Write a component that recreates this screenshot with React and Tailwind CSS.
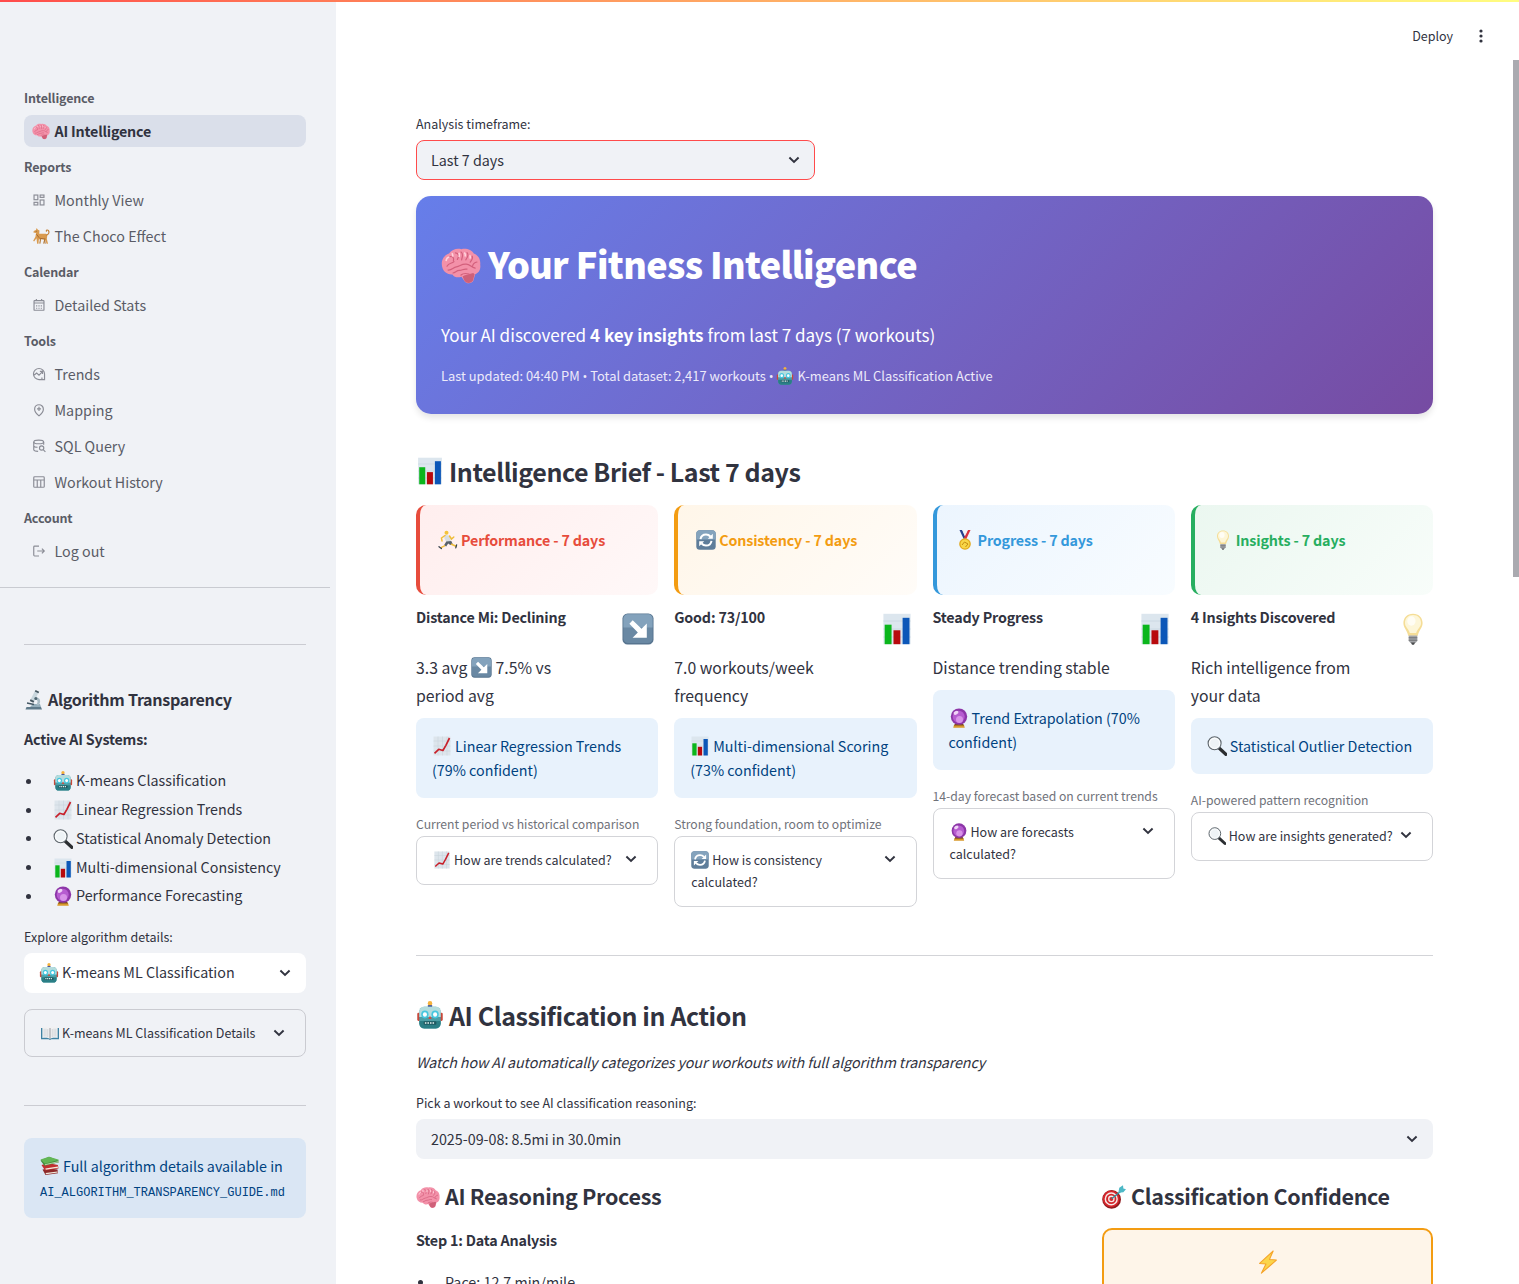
import React from "react";

/* ---------- pictographs ---------- */

const art = {
  brain: (
    <>
      <path d="M.6 11C-.2 8 1.400 5 4 4.300 5.400 2 8.300 1.500 10.200 2.100c2.600-.6 5.200.5 6.200 2.200 2.500.8 3.500 3.400 3.200 5.500.4 2.300-.7 4.200-2.500 4.800l-.9 3.200c-.8 1.700-3.300 1.800-4.300.5l-1.700-2.400c-1.600.6-3.800.2-4.500-1.200-2.200.2-4.500-1.100-5.100-3.700z" fill="#f391a9" />
      <path d="M11.600 15.200l4.500-1.200.7.600-.8 3.200c-.9 1.500-3.200 1.600-4.200.2l-1-2.200z" fill="#cf6079" />
      <path d="M3 10.600c1-2 2.300-1 3.500-2.300M4.500 5.800c1.500-.3 2 .8 1.700 2M7.200 3.900c1.800.2 1.800 1.800 1 3.300M10 3.500c1.500 1 .5 2.500.3 4M13 3.800c1 1.200.2 2.600-.6 3.600M15.600 5.600c.6 1.300-.4 2-1 3M18 8.500c-1 .2-2 1-2.200 2M3.500 12.500c1.800.3 2.500-1.300 4.200-1.600 1.800-.2 2.500-1.500 4.800-1.300 2-.1 2.500 1.600 4.600 2M6 14c1.300-.2 1.700-1.300 3.200-1.300 1.400.1 2-1 3.800-.6M10 15c1-.9 2.500-.9 4-.5" fill="none" stroke="#d3607c" strokeWidth=".6" strokeLinecap="round" />
      <path d="M2.500 8c.3-1.500 1-2 1.600-1.800M5.800 5.800c.2-1.200-.1-1.500-.5-1.600M9 6c.3-1 .2-1.700-.2-2M12 5.800c.3-1 0-1.700-.4-2M14.500 6.800c.2-.8.100-1.400-.2-1.700" stroke="#ffd3dc" strokeWidth=".8" fill="none" />
    </>
  ),
  dog: (
    <>
      <path d="M2 4.500l2.400-1.300L5.200 1l1.300 2 1.800 1-.3 3.500h7.500l1.500 1.800-.5 4 1.300 5.200h-1.500l-2-4.500-4.300-.5-2.400.3-.4 4.700H5.700L5 12.500l-2.700 3.500-1-.8 2.500-4.400.7-4L1.500 6z" fill="#d99a4e" />
      <path d="M16 9c2.800-.8 3.500-3.300 2.300-5-1-1.200-2.800-.5-2.300.6" stroke="#c28038" strokeWidth="1.300" fill="none" strokeLinecap="round" />
      <path d="M5 8l3 4M8.500 12.500l5.500.8M13.800 14l1 4.500" stroke="#9c602a" strokeWidth=".9" fill="none" />
      <path d="M9.500 13.500l-.8 5M14.500 12.500l-1.500 6" stroke="#b3762f" strokeWidth="1.200" />
      <circle cx="4.600" cy="4.600" r=".5" fill="#3b2613" />
    </>
  ),
  microscope: (
    <>
      <path d="M2.500 17h14.500l1 2.500H1.500z" fill="#5f7a8a" />
      <path d="M9 14h7l1 3H6z" fill="#93adba" />
      <path d="M12 7c4.500.8 5.500 5 2.300 8.500l-2-.8c2-2.500 1.700-4.700-1.300-5.400z" fill="#a9bcc6" />
      <path d="M11 .8l3.600 1.700-4.300 9L6.500 9.700z" fill="#c9d7de" />
      <path d="M11.600 0l3.600 1.700-.8 1.600-3.600-1.700zM6.600 9.300l3.700 1.800-.9 1.700-3.600-1.700z" fill="#44555f" />
      <path d="M3 13l7 1.500" stroke="#435764" strokeWidth="1.400" />
      <circle cx="11.800" cy="8.500" r="1.500" fill="#4f6672" />
    </>
  ),
  robot: (
    <g transform="translate(.9 0) scale(.91 .98)">
      <circle cx="10" cy="1.800" r="1.800" fill="#f6b23c" />
      <rect x="8.300" y="3" width="3.400" height="2" fill="#47569a" />
      <rect x="0" y="8.500" width="2.600" height="6" rx="1" fill="#c8483a" />
      <rect x="17.400" y="8.500" width="2.600" height="6" rx="1" fill="#c8483a" />
      <rect x="1.600" y="4.200" width="16.800" height="15.800" rx="3.800" fill="#4d9fa6" />
      <path d="M5.100 4.200h9.800c2 0 3.500 1.500 3.500 3.500v4H1.600v-4c0-2 1.500-3.500 3.500-3.500z" fill="#b4dcdd" />
      <path d="M1.600 14.500h16.800v1.700c0 2.400-1.500 3.800-4 3.800H5.600c-2.500 0-4-1.400-4-3.800z" fill="#2a7e85" />
      <circle cx="6" cy="9.800" r="2.900" fill="#45c6de" />
      <circle cx="14" cy="9.800" r="2.900" fill="#45c6de" />
      <circle cx="6" cy="9.800" r="1.600" fill="#fff" />
      <circle cx="14" cy="9.800" r="1.600" fill="#fff" />
      <path d="M10 10.800l1.300 2.400H8.700z" fill="#d5483a" />
      <rect x="5" y="14.800" width="10" height="2.500" rx=".8" fill="#1f5a61" />
      <path d="M6 16h8" stroke="#e8f4f2" strokeWidth="1.200" strokeDasharray="1.200 .8" />
    </g>
  ),
  trend: (
    <>
      <rect x="1.500" y=".5" width="17" height="19" fill="#dde5ec" />
      <path d="M1.500 5h17M1.500 10h17M1.500 15h17M6 .5v19M10.500 .5v19M15 .5v19" stroke="#c5d0da" strokeWidth=".5" />
      <path d="M2.500 17.300l4.200-4 4.200 1.200 3-5.200L17.500 2" stroke="#c8202a" strokeWidth="1.700" fill="none" strokeLinejoin="round" />
    </>
  ),
  lens: (
    <>
      <path d="M12.300 12.300l6.500 6" stroke="#2b2e31" strokeWidth="3.200" strokeLinecap="round" />
      <circle cx="7.600" cy="7.300" r="6.500" fill="#eef3f6" stroke="#5d656b" strokeWidth="1.100" />
      <circle cx="7.600" cy="7.300" r="5" fill="none" stroke="#fff" strokeWidth=".8" />
    </>
  ),
  bars: (
    <>
      <rect x="1.500" y=".5" width="17" height="19" fill="#dce6ee" />
      <path d="M1.500 5h17M1.500 10h17M1.500 15h17" stroke="#c8d5df" strokeWidth=".5" />
      <rect x="2.300" y="7.300" width="4.300" height="12.200" fill="#0bb61c" />
      <rect x="7.800" y="10.800" width="4.300" height="8.700" fill="#b80a0e" />
      <rect x="13.500" y="3" width="4.300" height="16.500" fill="#0c57b8" />
    </>
  ),
  crystal: (
    <>
      <path d="M5 17l-.8 2.700h11.600L15 17z" fill="#d89a2b" />
      <path d="M6 15.500h8l1 2H5z" fill="#7c4a1b" />
      <circle cx="10" cy="8.600" r="8.200" fill="#8d36a8" />
      <circle cx="9.700" cy="8.800" r="6" fill="#b65cd0" />
      <circle cx="10.500" cy="11.500" r="3.500" fill="#d893e8" />
      <ellipse cx="7" cy="4.800" rx="2.600" ry="1.800" fill="#f1d4f7" transform="rotate(-30 7 4.800)" />
    </>
  ),
  book: (
    <>
      <path d="M0 4.500h20v12.500l-8.500 0-1.500.8-1.500-.8H0z" fill="#3f82a3" />
      <path d="M1.500 3.200C5 2.500 8.500 3 10 4.500c1.500-1.500 5-2 8.500-1.300v12.300c-3.500-.6-7-.2-8.500 1-1.500-1.200-5-1.600-8.500-1z" fill="#f1f1f2" />
      <path d="M10 4.500v12" stroke="#8e9094" strokeWidth="1" />
      <path d="M3.500 5.200v8.800M5.500 5.200v8.800M7.500 5.600v8.800M12.500 5.600v8.800M14.500 5.200v8.800M16.500 5.200v8.800" stroke="#c9cbd0" strokeWidth=".8" />
    </>
  ),
  books: (
    <>
      <path d="M2.500 13.500l3 5.500 12.500-1.700-.5-3.800-8-1z" fill="#8d2a2a" />
      <path d="M5.500 17l12-1.600.3 1.200-11.600 1.700z" fill="#f0e9dc" />
      <path d="M1.500 9l3.500 5.500 13.500-2-.6-3.500L8 7z" fill="#c03030" />
      <path d="M5.300 12.500l12.600-2 .3 1.300L5.800 13.700z" fill="#f4ecdf" />
      <path d="M.5 4.500L4.500 9.800l14.500-3.500v-1.600L9 .8z" fill="#3e8e3d" />
      <path d="M.5 3.500L9 .8l10 3-14 4z" fill="#62b655" />
      <path d="M4.800 8.300L19 4.900v1L5 9.300z" fill="#b9d3a4" />
    </>
  ),
  runner: (
    <>
      <circle cx="8.500" cy="2.800" r="2" fill="#f3c33a" />
      <path d="M7 4.800l4.500 1 1.500 5.500-4.500 1.200L6.200 8z" fill="#d8dde2" />
      <path d="M7 5.500L3.500 8l.5 3M11.500 6l2 3 2.300-2" stroke="#efbd38" strokeWidth="1.500" fill="none" strokeLinecap="round" />
      <path d="M8.300 11.500l5-.5 1.500 3.300-2.600.8-2-1.700-2 3.200-2.200-1.400z" fill="#59616b" />
      <path d="M13.500 14.300l4.500 2M6.500 15.800l-3 1.500" stroke="#efbd38" strokeWidth="1.500" strokeLinecap="round" />
      <path d="M18.600 14.800l-.8 3M1 16.700l2.400 1.800" stroke="#36404c" strokeWidth="1.300" strokeLinecap="round" />
    </>
  ),
  cycle: (
    <>
      <rect x=".3" y=".3" width="19.400" height="19.400" rx="3.500" fill="#5e7d9a" />
      <path d="M3.800.3h12.400c2 0 3.500 1.500 3.500 3.500v5.700H.3V3.800c0-2 1.500-3.500 3.500-3.500z" fill="#84a3bd" />
      <path d="M4.500 9.200c.5-3 2.800-4.700 5.500-4.700 1.800 0 3.300.7 4.400 2M15.500 10.800c-.5 3-2.800 4.700-5.500 4.700-1.800 0-3.300-.7-4.400-2" stroke="#fff" strokeWidth="2" fill="none" />
      <path d="M16.800 3.800v5h-5zM3.200 16.200v-5h5z" fill="#fff" />
    </>
  ),
  medal: (
    <>
      <path d="M4.500 0h2.700l4 8-2.500 1z" fill="#27408f" />
      <path d="M15.500 0h-2.700l-4 8 2.500 1z" fill="#d9323f" />
      <path d="M7.200 0h1.500l2 4.500-.9 1.700zM12.800 0h-1.500l-1 2.300.7 1.700z" fill="#f2f2f4" />
      <circle cx="10" cy="14" r="5.800" fill="#e2a81c" />
      <circle cx="10" cy="14" r="4.500" fill="#f8d648" />
      <path d="M7 15l2.500-3 3.500 2-2.500 3" stroke="#c58d12" strokeWidth="1" fill="none" />
    </>
  ),
  bulb: (
    <>
      <path d="M10 .4c3.700 0 6 2.600 6 5.800 0 3-2.300 4.500-3 8H7c-.7-3.500-3-5-3-8C4 3 6.300.4 10 .4z" fill="#f5dd96" />
      <path d="M10 1.300c3 0 5 2 5 4.900 0 2.500-2.300 3.700-3 6.300H8c-.7-2.600-3-3.800-3-6.300 0-2.900 2-4.900 5-4.900z" fill="#fdf6d8" />
      <ellipse cx="9" cy="5" rx="2.600" ry="2.900" fill="#fffdf4" />
      <path d="M7.300 14h5.400v3.500l-1.200 1.300h-3l-1.200-1.300z" fill="#a3a5a8" />
      <path d="M7.300 15.500h5.400M7.300 17h5.400" stroke="#6b6d70" strokeWidth=".6" />
      <path d="M8.600 18.500h2.800l-.8 1.300H9.400z" fill="#4a4b4d" />
    </>
  ),
  arrow: (
    <>
      <rect x=".3" y=".3" width="19.400" height="19.400" rx="3.200" fill="#57748f" />
      <rect x=".9" y=".8" width="18.200" height="18" rx="2.800" fill="#6988a3" />
      <path d="M3.700.8h12.600c1.500 0 2.800 1.300 2.800 2.800v5.400H.9V3.600C.9 2.100 2.200.8 3.700.8z" fill="#83a2bc" />
      <path d="M6.700 4.500l5.500 5.300 3.300-3.200v8.900H6.600l3.300-3.300-5.300-5.500z" fill="#fff" />
    </>
  ),
  target: (
    <>
      <circle cx="8" cy="12" r="7.800" fill="#8f1a1e" />
      <circle cx="7.600" cy="11.600" r="7" fill="#d4262b" />
      <circle cx="7.700" cy="11.600" r="4.900" fill="none" stroke="#f6e9e8" strokeWidth="1.200" />
      <circle cx="7.800" cy="11.600" r="2.200" fill="none" stroke="#f6e9e8" strokeWidth="1.100" />
      <path d="M8 11.500l8.500-7" stroke="#2f8d9e" strokeWidth="1.100" />
      <path d="M13.600 6.500l.8-4.300L17.500.3l.3 2.600 2.200.6-2.200 2.500z" fill="#4db8c6" />
    </>
  ),
  bolt: (
    <path d="M14.300.8L3 11.200l5.300.4L4.500 19.300 17 8.400l-5.800-.5z" fill="#fbd54a" stroke="#f5a32a" strokeWidth=".9" strokeLinejoin="round" />
  ),
};

function Emoji({ name, className = "" }) {
  return (
    <svg viewBox="0 0 20 20" className={"inline-block shrink-0 " + className} aria-hidden="true">
      {art[name]}
    </svg>
  );
}

/* ---------- line icons ---------- */

const lineArt = {
  dashboard: (
    <>
      <rect x="3.500" y="3.500" width="6.500" height="8" />
      <rect x="14" y="3.500" width="6.500" height="4" />
      <rect x="14" y="12" width="6.500" height="8.500" />
      <rect x="3.500" y="16" width="6.500" height="4.500" />
    </>
  ),
  calendar: (
    <>
      <rect x="3.500" y="4.500" width="17" height="16.500" rx="1" />
      <path d="M3.500 8.500h17M7.500 1.500v3M16.500 1.500v3" />
      <path d="M7 13.500h2M11 13.500h2M15 13.500h2M7 17.500h2M11 17.500h2M15 17.500h2" />
    </>
  ),
  trends: (
    <path d="M21.500 12A9.500 9.500 0 1 0 12 21.500h9.500zM2.800 14.500L8 10.500l4 3.500 5.500-5.500M13.500 7.500H18v4.500M17 18v3" />
  ),
  pin: <path d="M12 22c-5-4.300-7.500-8-7.500-11.500a7.500 7.500 0 0 1 15 0C19.500 14 17 17.700 12 22zM12 6.500v7M8.500 10h7" />,
  database: (
    <>
      <ellipse cx="11.500" cy="5" rx="8.500" ry="3.200" />
      <path d="M3 5v13.500c0 1.300 3 2.500 7.500 2.700M20 5v5M3 11.500c0 1.300 2.500 2.500 6.500 2.700" />
      <circle cx="16.500" cy="15.500" r="3.700" />
      <path d="M19.500 18.500l3.500 3.500" />
    </>
  ),
  table: (
    <>
      <rect x="3" y="3" width="18" height="18" rx="1.500" />
      <path d="M3 8.500h18M9 8.500V21M15 8.500V21" />
    </>
  ),
  logout: <path d="M12 3.500H4.500A1.500 1.500 0 0 0 3 5v14a1.500 1.500 0 0 0 1.500 1.500H12M9 12h12M17 8l4 4-4 4" />,
};

function LineIcon({ name }) {
  return (
    <svg viewBox="0 0 24 24" className="mb-px h-3.5 w-3.5 shrink-0 text-[#8b8d96]" fill="none" stroke="currentColor" strokeWidth="2">
      {lineArt[name]}
    </svg>
  );
}

function Chevron({ className = "" }) {
  return (
    <svg viewBox="0 0 12 8" className={"h-2 w-3 shrink-0 text-[#31333f] " + className} fill="none" stroke="currentColor" strokeWidth="1.900">
      <path d="M1.400 1.500L6 6l4.600-4.500" />
    </svg>
  );
}

/* ---------- sidebar ---------- */

const nav = [
  { title: "Intelligence", items: [{ label: "AI Intelligence", emoji: "brain", active: true }] },
  {
    title: "Reports",
    items: [
      { label: "Monthly View", icon: "dashboard" },
      { label: "The Choco Effect", emoji: "dog" },
    ],
  },
  { title: "Calendar", items: [{ label: "Detailed Stats", icon: "calendar" }] },
  {
    title: "Tools",
    items: [
      { label: "Trends", icon: "trends" },
      { label: "Mapping", icon: "pin" },
      { label: "SQL Query", icon: "database" },
      { label: "Workout History", icon: "table" },
    ],
  },
  { title: "Account", items: [{ label: "Log out", icon: "logout" }] },
];

const systems = [
  ["robot", "K-means Classification"],
  ["trend", "Linear Regression Trends"],
  ["lens", "Statistical Anomaly Detection"],
  ["bars", "Multi-dimensional Consistency"],
  ["crystal", "Performance Forecasting"],
];

function Sidebar() {
  return (
    <aside className="h-[1284px] w-[336px] shrink-0 overflow-hidden bg-[#f0f2f6] pt-[78px]">
      <nav className="pr-[30px] pl-6">
        {nav.map((group) => (
          <section key={group.title}>
            <h2 className="h-[37px] pt-[10px] text-[12.5px] leading-5 font-semibold tracking-[-0.15px] text-[#5a5c66]">{group.title}</h2>
            <div className="flex flex-col gap-1">
              {group.items.map((item) => (
                <a
                  key={item.label}
                  className={
                    "flex h-8 items-center rounded-lg px-2 text-[14.3px] leading-6 " +
                    (item.active ? "bg-[#dadfea] font-semibold tracking-[-0.2px] text-[#31333f]" : "text-[#5a5c66]")
                  }
                >
                  <span className="flex w-[22.5px] items-center">
                    {item.emoji ? <Emoji name={item.emoji} className="h-[18px] w-[18px]" /> : <LineIcon name={item.icon} />}
                  </span>
                  <span className="pb-px">{item.label}</span>
                </a>
              ))}
            </div>
          </section>
        ))}
      </nav>
      <div className="mt-5 mr-1.5 border-b border-[#c9cbd1]" />

      <div className="pr-[30px] pl-6 text-[#31333f]">
        <div className="mt-14 border-b border-[#cbccd2]" />
        <h3 className="mt-[41px] flex h-7 items-center text-[16.1px] leading-7 font-semibold tracking-[-0.3px]">
          <Emoji name="microscope" className="mr-1 h-5 w-5" />
          <span className="pb-0.5">Algorithm Transparency</span>
        </h3>
        <p className="mt-[13px] text-[14.3px] leading-6 font-semibold tracking-[-0.2px]">Active AI Systems:</p>
        <ul className="mt-4 flex flex-col">
          {systems.map(([icon, label]) => (
            <li key={label} className="flex h-[28.75px] items-center text-[14.3px] leading-6">
              <span className="mr-[22px] ml-0.5 h-[5px] w-[5px] rounded-full bg-[#31333f]" />
              <Emoji name={icon} className="mr-[3px] h-5 w-5" />
              <span className="pb-0.5">{label}</span>
            </li>
          ))}
        </ul>

        <p className="mt-[16px] text-[12.5px] leading-5">Explore algorithm details:</p>
        <div className="mt-1.5 flex h-10 items-center rounded-lg bg-white pr-[15px] pl-[15px] text-[14.3px] leading-6">
          <Emoji name="robot" className="mr-[3px] h-5 w-5" />
          <span className="flex-1 pb-px">K-means ML Classification</span>
          <Chevron />
        </div>
        <div className="mt-4 flex h-12 items-center rounded-lg border border-[#cacbd1] pr-5 pl-4 text-[12.5px] leading-5">
          <Emoji name="book" className="mr-[3px] h-[18px] w-[18px]" />
          <span className="flex-1">K-means ML Classification Details</span>
          <Chevron />
        </div>
        <div className="mt-12 border-b border-[#cbccd2]" />
        <div className="mt-8 h-20 rounded-lg bg-[#dae6f4] px-4 pt-4 text-[14.3px] leading-6 text-[#004280]">
          <div className="flex items-center">
            <Emoji name="books" className="mr-[3px] h-5 w-5" />
            <span>Full algorithm details available in</span>
          </div>
          <code className="mt-[3px] block font-['Liberation_Mono',monospace] text-xs leading-6">AI_ALGORITHM_TRANSPARENCY_GUIDE.md</code>
        </div>
      </div>
    </aside>
  );
}

/* ---------- brief columns ---------- */

const columns = [
  {
    icon: "runner",
    title: "Performance - 7 days",
    card: "border-[#e74c3c] bg-linear-135 from-[#ffeeee] to-[#fff8f8] text-[#e74c3c]",
    heading: "Distance Mi: Declining",
    badge: "arrow",
    metric: [
      <React.Fragment key="a">
        3.3 avg <Emoji name="arrow" className="h-[21px] w-[21px] align-[-4px]" /> 7.5% vs
      </React.Fragment>,
      "period avg",
    ],
    infoIcon: "trend",
    info: ["Linear Regression Trends", "(79% confident)"],
    caption: "Current period vs historical comparison",
    askIcon: "trend",
    ask: ["How are trends calculated?"],
  },
  {
    icon: "cycle",
    title: "Consistency - 7 days",
    card: "border-[#f39c12] bg-linear-135 from-[#fff6e9] to-[#fffcf8] text-[#f39c12]",
    heading: "Good: 73/100",
    badge: "bars",
    metric: ["7.0 workouts/week", "frequency"],
    infoIcon: "bars",
    info: ["Multi-dimensional Scoring", "(73% confident)"],
    caption: "Strong foundation, room to optimize",
    askIcon: "cycle",
    ask: ["How is consistency", "calculated?"],
  },
  {
    icon: "medal",
    title: "Progress - 7 days",
    card: "border-[#3498db] bg-linear-135 from-[#ecf5fe] to-[#f8fcff] text-[#3498db]",
    heading: "Steady Progress",
    badge: "bars",
    metric: ["Distance trending stable"],
    infoIcon: "crystal",
    info: ["Trend Extrapolation (70%", "confident)"],
    caption: "14-day forecast based on current trends",
    askIcon: "crystal",
    ask: ["How are forecasts", "calculated?"],
  },
  {
    icon: "bulb",
    title: "Insights - 7 days",
    card: "border-[#27ae60] bg-linear-135 from-[#ebf7f0] to-[#f8fdfa] text-[#27ae60]",
    heading: "4 Insights Discovered",
    badge: "bulb",
    metric: ["Rich intelligence from", "your data"],
    infoIcon: "lens",
    info: ["Statistical Outlier Detection"],
    caption: "AI-powered pattern recognition",
    askIcon: "lens",
    ask: ["How are insights generated?"],
  },
];

function BriefColumn({ col }) {
  return (
    <div className="min-w-0 text-[#31333f]">
      <div className={"flex h-[90px] items-start rounded-[10px] border-l-4 pt-[25px] pl-[18px] " + col.card}>
        <Emoji name={col.icon} className="mr-[3px] h-5 w-5" />
        <span className="text-[14.3px] leading-5 font-semibold tracking-[-0.16px] whitespace-nowrap">{col.title}</span>
      </div>
      <div className="flex h-[59px] justify-between pt-[10px] pr-1">
        <span className="text-[14.3px] leading-6 font-semibold tracking-[-0.18px] whitespace-nowrap">{col.heading}</span>
        <Emoji name={col.badge} className="mt-2 h-8 w-8" />
      </div>
      <div className="text-[15.8px] leading-7 whitespace-nowrap">
        {col.metric.map((line, i) => (
          <div key={i} className="h-7">{line}</div>
        ))}
      </div>
      <div className="mt-2 rounded-lg bg-[#e8f2fc] p-4 text-[14.3px] leading-6 whitespace-nowrap text-[#004280]">
        {col.info.map((line, i) => (
          <div key={line} className="flex h-6 items-center">
            {i === 0 && <Emoji name={col.infoIcon} className="mr-[3px] h-5 w-5" />}
            <span>{line}</span>
          </div>
        ))}
      </div>
      <p className="mt-[15px] mb-px text-[12.2px] leading-[22px] whitespace-nowrap text-[#70727a]">{col.caption}</p>
      <div className="flex items-start justify-between rounded-lg border border-[#d3d4d8] pt-3 pb-[12.6px] pr-5 pl-4 text-[12.5px] leading-[22.4px] whitespace-nowrap">
        <div>
          {col.ask.map((line, i) => (
            <div key={line} className="flex items-center">
              {i === 0 && <Emoji name={col.askIcon} className="mr-[3px] h-[18px] w-[18px]" />}
              <span>{line}</span>
            </div>
          ))}
        </div>
        <Chevron className="mt-1.5" />
      </div>
    </div>
  );
}

/* ---------- page ---------- */

function Dot() {
  return <span className="font-['Open_Sans',sans-serif]">•</span>;
}

export default function App() {
  return (
    <div className="relative h-[1284px] w-[1519px] overflow-hidden bg-white font-['Noto_Sans_CJK_SC','Source_Sans_3',sans-serif] text-[#31333f]">
      <div className="flex">
        <Sidebar />
        <div className="flex-1">
          <header className="flex h-[60px] items-center justify-end pt-3 pr-9">
            <span className="pb-px text-[12.5px] leading-5">Deploy</span>
            <svg viewBox="0 0 4 14" className="ml-[26px] h-3.5 w-1" fill="#31333f">
              <circle cx="2" cy="2" r="1.600" />
              <circle cx="2" cy="7" r="1.600" />
              <circle cx="2" cy="12" r="1.600" />
            </svg>
          </header>

          <main className="w-[1097px] pt-[54px] pl-20">
            <p className="text-[12.5px] leading-5">Analysis timeframe:</p>
            <div className="mt-1.5 flex h-10 w-[399px] items-center justify-between rounded-lg border border-[#ff4b4b] bg-[#f0f2f6] pr-3.5 pl-3.5 text-[14.3px] leading-6">
              <span>Last 7 days</span>
              <Chevron />
            </div>

            <section className="mt-4 h-[218px] rounded-[15px] bg-linear-135 from-[#667eea] to-[#764ba2] px-[25px] text-white shadow-[0_4px_6px_rgba(0,0,0,0.1)]">
              <h1 className="flex h-[138px] items-center text-[36px] font-extrabold tracking-[-0.64px]">
                <Emoji name="brain" className="mr-[7px] h-10 w-10" />
                <span className="pb-1">Your Fitness Intelligence</span>
              </h1>
              <p className="-mt-[13px] text-[17.07px] leading-7">
                Your AI discovered <b>4 key insights</b> from last 7 days (7 workouts)
              </p>
              <p className="mt-[17px] flex items-center text-[12.9px] leading-5 whitespace-pre text-[#edeafa]">
                <span>
                  Last updated: 04:40 PM <Dot /> Total dataset: 2,417 workouts <Dot />{" "}
                </span>
                <Emoji name="robot" className="mr-[3px] h-[18px] w-[18px]" />
                <span>K-means ML Classification Active</span>
              </p>
            </section>

            <h2 className="mt-[41px] flex h-9 items-center text-[25px] font-semibold tracking-[-0.42px]">
              <Emoji name="bars" className="mr-[5px] mb-1 h-7 w-7" />
              <span className="pb-0.5">Intelligence Brief - Last 7 days</span>
            </h2>
            <div className="mt-[14px] grid h-[402px] grid-cols-4 items-start gap-4">
              {columns.map((col) => (
                <BriefColumn key={col.title} col={col} />
              ))}
            </div>

            <div className="mt-12 border-b border-[#d3d4d8]" />

            <h2 className="mt-[43px] flex h-9 items-center text-[25px] font-semibold tracking-[-0.42px]">
              <Emoji name="robot" className="mr-[5px] mb-1 h-7 w-7" />
              <span className="pb-0.5">AI Classification in Action</span>
            </h2>
            <p className="mt-[15px] text-[14.3px] leading-6 tracking-[-0.11px] italic">
              Watch how AI automatically categorizes your workouts with full algorithm transparency
            </p>
            <p className="mt-[19px] text-[12.5px] leading-5">Pick a workout to see AI classification reasoning:</p>
            <div className="mt-1.5 flex h-10 items-center justify-between rounded-lg bg-[#f0f2f6] px-[15px] text-[14.3px] leading-6">
              <span>2025-09-08: 8.5mi in 30.0min</span>
              <Chevron />
            </div>

            <div className="mt-5 grid grid-cols-[670px_331px] gap-4">
              <div>
                <h3 className="flex h-9 items-center text-[21.5px] font-semibold tracking-[-0.3px]">
                  <Emoji name="brain" className="mr-[5px] h-6 w-6" />
                  <span className="pb-0.5">AI Reasoning Process</span>
                </h3>
                <p className="mt-[13px] text-[14.3px] leading-6 font-semibold tracking-[-0.2px]">Step 1: Data Analysis</p>
                <div className="mt-[18px] flex items-center text-[14.3px] leading-6">
                  <span className="mr-[22px] ml-0.5 h-[5px] w-[5px] rounded-full bg-[#31333f]" />
                  <span>Pace: 12.7 min/mile</span>
                </div>
              </div>
              <div>
                <h3 className="flex h-9 items-center text-[21.5px] font-semibold tracking-[-0.3px]">
                  <Emoji name="target" className="mr-[5px] h-6 w-6" />
                  <span className="pb-0.5">Classification Confidence</span>
                </h3>
                <div className="mt-[13px] flex h-40 justify-center rounded-[10px] border-2 border-[#f39c12] bg-[#fef5e9] pt-5">
                  <Emoji name="bolt" className="h-6 w-6" />
                </div>
              </div>
            </div>
          </main>
        </div>
      </div>

      <div className="absolute top-0 left-0 h-0.5 w-full bg-linear-to-r from-[#ff4b4b] to-[#fffd80]" />
      <div className="absolute top-[60px] right-0 h-[517px] w-1.5 bg-[#aaaab0]" />
    </div>
  );
}
